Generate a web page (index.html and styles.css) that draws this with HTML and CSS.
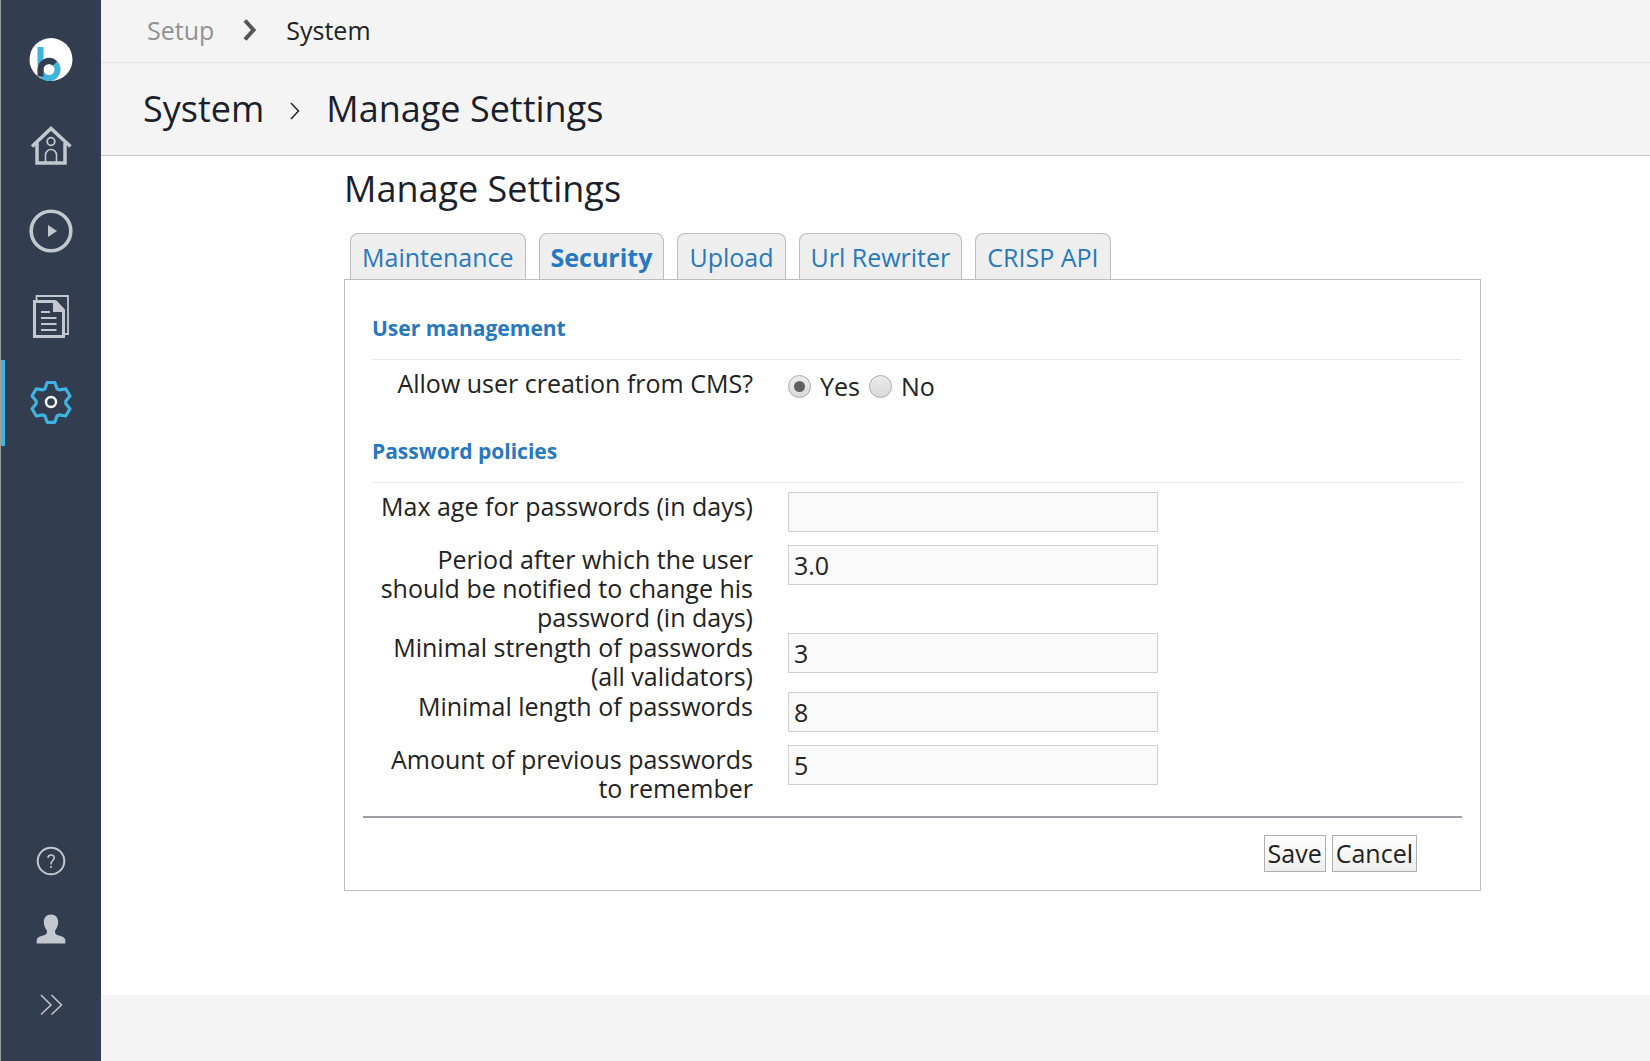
FILE: index.html
```html
<!DOCTYPE html>
<html lang="en">
<head>
<meta charset="utf-8">
<title>Manage Settings</title>
<link rel="stylesheet" href="styles.css">
</head>
<body>
<div class="app">
  <aside class="sidebar">
    <nav class="nav" aria-label="Main">
      <a class="nav-item" href="#" aria-label="Start">
        <svg class="icon" viewBox="0 0 48 48"><circle cx="24" cy="24.500" r="21.500" fill="#fff"/><path d="M10.500 12h6v18h-6z" fill="#3fb4dc"/><circle cx="22" cy="34.500" r="8.500" fill="none" stroke="#3fb4dc" stroke-width="6"/><path d="M13.500 41.500V34.500a8.500 8.500 0 0 1 14.500-6" fill="none" stroke="#323d50" stroke-width="6"/></svg>
      </a>
      <a class="nav-item" href="#" aria-label="Home">
        <svg class="icon" viewBox="0 0 48 48" fill="none" stroke="#c3c7ce"><path d="M5 25.500L24 7.500l19.500 18" stroke-width="3.500"/><path d="M10 22v20h28V22" stroke-width="3.500"/><circle cx="24" cy="20.500" r="3.800" stroke-width="1.800"/><path d="M18.500 42v-8a5.500 5.500 0 0 1 11 0v8" stroke-width="1.600"/></svg>
      </a>
      <a class="nav-item" href="#" aria-label="Channels">
        <svg class="icon" viewBox="0 0 48 48"><circle cx="24" cy="24" r="19.800" fill="none" stroke="#c3c7ce" stroke-width="3.600"/><path d="M21 18l9 6-9 6z" fill="#c3c7ce"/></svg>
      </a>
      <a class="nav-item" href="#" aria-label="Content">
        <svg class="icon" viewBox="0 0 48 48" fill="none" stroke="#c3c7ce"><path d="M9.500 7V3h31.500v38H37" stroke-width="1.800"/><path d="M7.500 8.500h20l9 9V43.500h-29z" stroke-width="3"/><path d="M26 7.500h3.500l8.500 9v2.500H26z" fill="#c3c7ce" stroke="none"/><path d="M14 19h9M14 25h15.500M14 31h15.500M14 37h15.500" stroke-width="1.800"/></svg>
      </a>
      <a class="nav-item nav-item-active" href="#" aria-label="Setup" aria-current="page">
        <svg class="icon" viewBox="0 0 48 48" fill="none"><path d="M20.200 3.500h7.600l2.200 6.300 2.200 1.100 6.500-1.100 4.300 7.200-4.200 5v2.800l4.200 5-4.300 7.200-6.500-1.100-2.200 1.100-2.200 6.300h-7.600L18 37l-2.200-1.100L9.300 37 5 29.800l4.200-5V22L5 17l4.300-7.200 6.500 1.100L18 9.800z" stroke="#3fb4e2" stroke-width="3.200" stroke-linejoin="round"/><circle cx="24" cy="23" r="5" stroke="#fff" stroke-width="2.400"/></svg>
      </a>
    </nav>
    <nav class="nav-foot" aria-label="Account">
      <a class="foot-item" href="#" aria-label="Help">
        <svg class="icon" viewBox="0 0 48 48" fill="none" stroke="#c3c7ce"><circle cx="24" cy="25" r="13.300" stroke-width="2"/><path d="M21 22c0-4 6.200-4 6.200-.2 0 2.600-3.200 2.800-3.200 6v.7M24 30v2" stroke-width="1.600"/></svg>
      </a>
      <a class="foot-item" href="#" aria-label="User">
        <svg class="icon" viewBox="0 0 48 48"><path d="M24 6.500c4.500 0 7.200 3 7.200 7.500 0 4-1.700 6.500-3.200 9 0 3 .8 3.700 4.500 4.700 4 1.100 5.800 2.300 5.800 4.300v3.500H9.700V32c0-2 1.800-3.200 5.800-4.300 3.700-1 4.500-1.700 4.500-4.700-1.500-2.500-3.200-5-3.200-9 0-4.500 2.700-7.500 7.200-7.500z" fill="#c3c7ce"/></svg>
      </a>
      <a class="foot-item" href="#" aria-label="Expand menu">
        <svg class="icon" viewBox="0 0 48 48" fill="none" stroke="#c3c7ce" stroke-width="1.500"><path d="M14 15l10 10-10 9.500M24.500 15l10 10-10 9.500"/></svg>
      </a>
    </nav>
  </aside>

  <div class="page">
    <nav class="crumbs" aria-label="Breadcrumb">
      <a class="crumb-link" href="#">Setup</a>
      <svg class="crumb-arrow" viewBox="0 0 14 22" fill="none" stroke="#555" stroke-width="4"><path d="M2 1.500l8.500 9.500L2 20.500"/></svg>
      <span>System</span>
    </nav>
    <header class="title-bar">
      <span>System</span>
      <svg class="title-arrow" viewBox="0 0 10 24" fill="none" stroke="#222" stroke-width="1.500"><path d="M1 7l7.500 8L1 23"/></svg>
      <span>Manage Settings</span>
    </header>

    <main class="content">
      <h1 class="heading">Manage Settings</h1>
      <nav class="tabs" aria-label="Settings">
        <a class="tab" href="#">Maintenance</a>
        <a class="tab tab-active" href="#">Security</a>
        <a class="tab" href="#">Upload</a>
        <a class="tab" href="#">Url Rewriter</a>
        <a class="tab" href="#">CRISP API</a>
      </nav>
      <form class="panel">
        <section class="group">
          <h2 class="group-title">User management</h2>
          <div class="row" role="radiogroup" aria-labelledby="creation">
            <span class="label" id="creation">Allow user creation from CMS?</span>
            <div class="choices">
              <input class="radio" type="radio" name="creation" id="yes" checked>
              <label for="yes">Yes</label>
              <input class="radio" type="radio" name="creation" id="no">
              <label for="no">No</label>
            </div>
          </div>
        </section>
        <section class="group">
          <h2 class="group-title">Password policies</h2>
          <div class="row">
            <label class="label" for="age">Max age for passwords (in days)</label>
            <input class="field" type="text" id="age">
          </div>
          <div class="row">
            <label class="label" for="period">Period after which the user should be notified to change his password (in days)</label>
            <input class="field" type="text" id="period" value="3.0">
          </div>
          <div class="row">
            <label class="label" for="strength">Minimal strength of passwords (all validators)</label>
            <input class="field" type="text" id="strength" value="3">
          </div>
          <div class="row">
            <label class="label" for="length">Minimal length of passwords</label>
            <input class="field" type="text" id="length" value="8">
          </div>
          <div class="row">
            <label class="label" for="amount">Amount of previous passwords to remember</label>
            <input class="field" type="text" id="amount" value="5">
          </div>
        </section>
        <div class="actions">
          <button class="button" type="submit">Save</button>
          <button class="button" type="button">Cancel</button>
        </div>
      </form>
    </main>
    <footer class="footer"></footer>
  </div>
</div>
</body>
</html>
```
FILE: styles.css
```css
* {
  box-sizing: border-box;
}

body {
  margin: 0;
  font-family: "Open Sans", "Noto Sans", sans-serif;
  font-size: 25px;
  line-height: 29px;
  color: #222;
  background: #fff;
}

a {
  text-decoration: none;
}

.app {
  display: flex;
  min-height: 100vh;
}

/* Sidebar */
.sidebar {
  display: flex;
  flex: none;
  flex-direction: column;
  justify-content: space-between;
  width: 101px;
  padding: 16px 0 21px;
  border-left: 1px solid #9c9e9c;
  background: #323d50;
}

.nav-item,
.foot-item {
  display: flex;
  align-items: center;
  justify-content: center;
}

.nav-item {
  height: 86px;
}

.foot-item {
  height: 72px;
}

.nav-item-active {
  box-shadow: inset 4px 0 #3fb4e2;
}

.icon {
  width: 48px;
  height: 48px;
}

/* Page head */
.page {
  display: flex;
  flex: 1;
  flex-direction: column;
  min-width: 0;
}

.crumbs {
  display: flex;
  align-items: center;
  gap: 29px;
  height: 63px;
  padding: 0 0 2px 46px;
  border-bottom: 1px solid #e4e4e4;
  background: #f4f4f4;
}

.crumb-link {
  color: #929292;
}

.crumb-arrow {
  width: 14px;
  height: 22px;
}

.title-bar {
  display: flex;
  align-items: center;
  gap: 26px;
  height: 93px;
  padding: 0 0 2px 42px;
  border-bottom: 1px solid #c8c8c8;
  background: #f4f4f4;
  color: #1b1f2b;
  font-size: 36px;
}

.title-arrow {
  width: 10px;
  height: 24px;
}

/* Content */
.content {
  flex: 1;
  padding: 8px 169px 32px 243px;
}

.heading {
  margin: 0 0 19px;
  color: #1b1f2b;
  font-size: 36px;
  font-weight: 400;
  line-height: 50px;
}

.tabs {
  display: flex;
  gap: 13px;
  padding-left: 6px;
}

.tab {
  padding: 9px 11px 7px;
  border: 1px solid #bdbdbd;
  border-bottom: 0;
  border-radius: 8px 8px 0 0;
  background: #eee;
  color: #2878c0;
}

.tab-active {
  font-weight: 700;
}

.panel {
  padding: 19px 18px 18px;
  border: 1px solid #bdbdbd;
}

.group {
  margin-left: 9px;
  padding-top: 15px;
}

.group-title {
  margin: 0 0 9px;
  padding-bottom: 16px;
  border-bottom: 1px solid #e8e8e8;
  color: #2878c0;
  font-size: 21px;
  line-height: 29px;
}

.row {
  display: flex;
  align-items: flex-start;
  gap: 35px;
  min-height: 53px;
  padding-bottom: 1px;
}

.label {
  width: 381px;
  text-align: right;
}

.choices {
  display: flex;
  align-items: center;
  gap: 9px;
  padding-top: 3px;
}

.radio {
  display: grid;
  place-items: center;
  width: 23px;
  height: 23px;
  margin: 0;
  border: 1px solid #aaa;
  border-radius: 50%;
  appearance: none;
  background: linear-gradient(#ececec, #d9d9d9);
}

.radio:checked::before {
  width: 11px;
  height: 11px;
  border-radius: 50%;
  background: #606060;
  content: "";
}

.field {
  width: 370px;
  height: 40px;
  padding: 0 5px;
  border: 1px solid #d0d0d0;
  background: #fafafa;
  color: inherit;
  font: inherit;
}

.actions {
  display: flex;
  justify-content: flex-end;
  gap: 6px;
  margin-top: 12px;
  padding: 17px 45px 0 0;
  border-top: 2px solid #9b9fa8;
}

.button {
  height: 37px;
  padding: 0 3px;
  border: 1px solid #b0b0b0;
  background: linear-gradient(#fff, #eee);
  color: inherit;
  font: inherit;
}

.footer {
  height: 66px;
  background: #f4f4f4;
}
```
